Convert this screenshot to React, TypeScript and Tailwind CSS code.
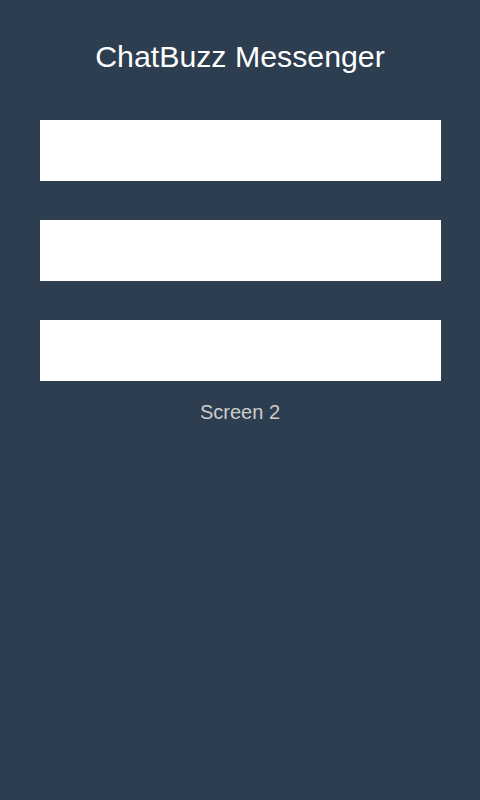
export default function App() {
  return (
    <div
      className="min-h-[800px] w-full bg-[#2c3e50] flex flex-col items-center pt-[40px]"
      style={{ fontFamily: '"Liberation Sans", Arial, sans-serif' }}
    >
      <h1 className="text-[30.3px] leading-[34px] text-white">ChatBuzz Messenger</h1>

      <div className="mt-[46px] flex flex-col gap-[39px]">
        <input className="w-[401px] h-[61px] bg-white outline-none" />
        <input className="w-[401px] h-[61px] bg-white outline-none" />
        <input className="w-[401px] h-[61px] bg-white outline-none" />
      </div>

      <p className="mt-[20px] text-[20px] leading-[23px] text-[#cccccc]">Screen 2</p>
    </div>
  );
}
